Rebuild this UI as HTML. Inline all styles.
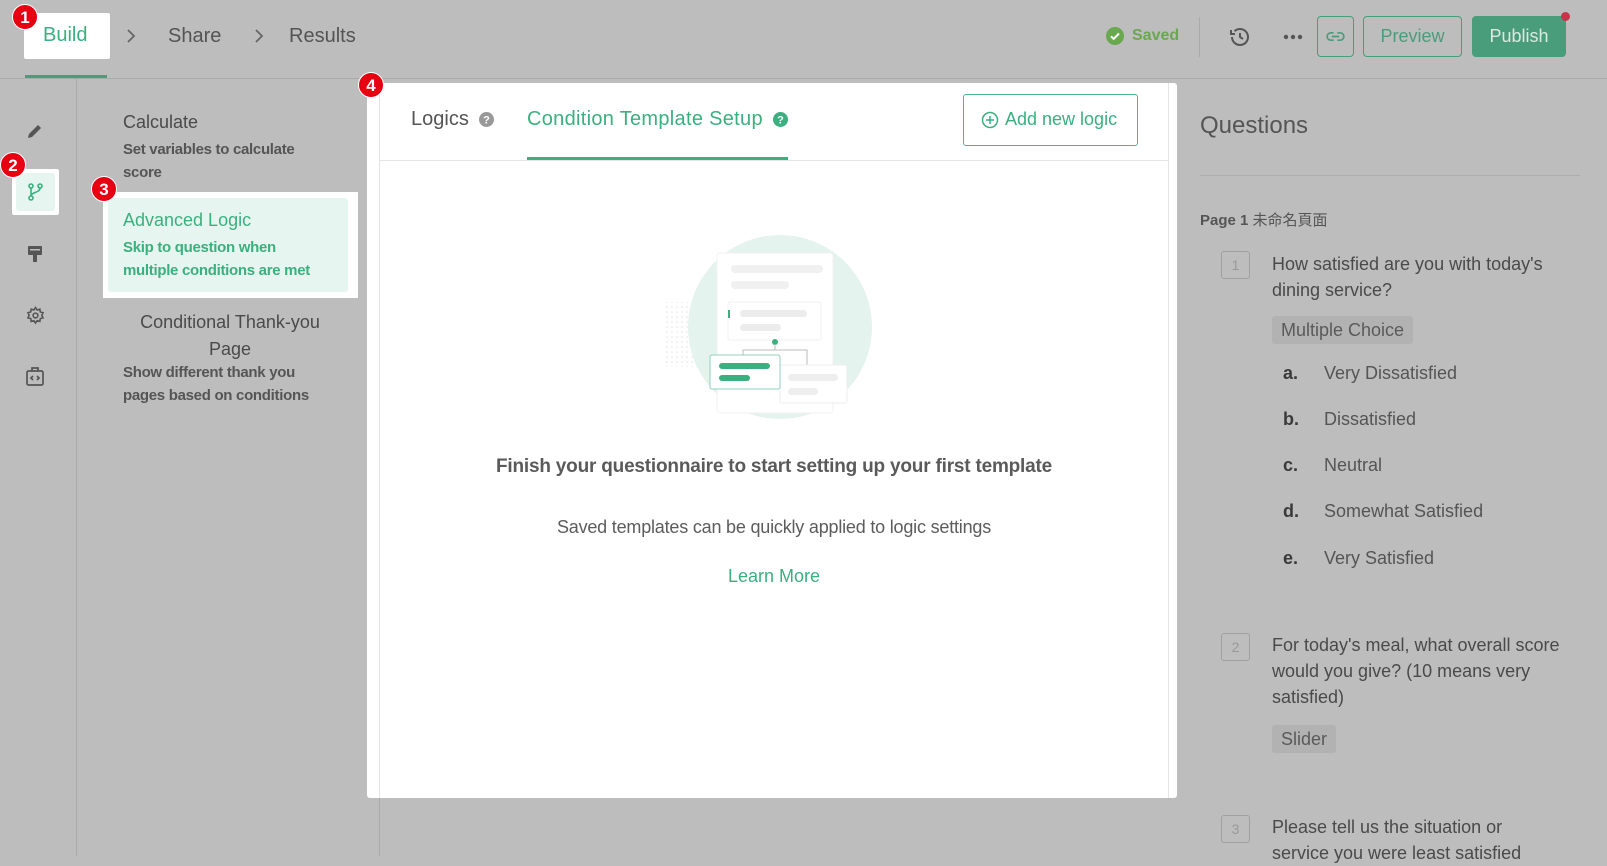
<!DOCTYPE html>
<html><head><meta charset="utf-8"><style>
*{box-sizing:border-box;margin:0;padding:0}
body{width:1607px;height:856px;overflow:hidden;background:#bdbdbd;font-family:"Liberation Sans","Noto Sans CJK TC",sans-serif;position:relative;color:#545454}
.a{position:absolute}
.badge{position:absolute;width:26px;height:26px;border-radius:50%;background:#e60012;color:#fff;font-weight:bold;font-size:17px;text-align:center;line-height:26px;border:1px solid #fff}
.nv{font-size:20px;color:#545454}
.ic{position:absolute}
.q{position:absolute;font-size:18px;line-height:26px;color:#4a4a4a}
.num{position:absolute;width:29px;height:28px;border:1px solid #a0a0a0;border-radius:3px;color:#999;font-size:14px;text-align:center;line-height:26px}
.tag{position:absolute;background:#b2b2b2;border-radius:3px;font-size:18px;color:#5a5a5a;padding:0 9px;height:28px;line-height:28px}
.opt{position:absolute;font-size:18px;color:#555}
.opt b{display:inline-block;width:41px;color:#3a3a3a}
</style></head><body>
<div class="a" style="left:0;top:78px;width:1607px;height:1px;background:#aaa"></div>
<div class="a" style="left:24px;top:13px;width:86px;height:46px;background:#fff;border-radius:2px"></div>
<div class="a" style="left:43px;top:24px;font-size:20px;color:#3bb07f">Build</div>
<div class="a" style="left:25px;top:75px;width:82px;height:3px;background:#4a9d7a"></div>
<svg class="ic" style="left:126px;top:29px" width="10" height="14" viewBox="0 0 10 14" fill="none" stroke="#666" stroke-width="1.8"><path d="M2 1l6 6-6 6"/></svg>
<div class="a nv" style="left:168px;top:25px">Share</div>
<svg class="ic" style="left:254px;top:29px" width="10" height="14" viewBox="0 0 10 14" fill="none" stroke="#666" stroke-width="1.8"><path d="M2 1l6 6-6 6"/></svg>
<div class="a nv" style="left:289px;top:25px">Results</div>
<div class="badge" style="left:12px;top:4px">1</div>

<svg class="ic" style="left:1106px;top:27px" width="18" height="18" viewBox="0 0 18 18"><circle cx="9" cy="9" r="9" fill="#6aa84f"/><path d="M5 9.3l2.7 2.6L13 6.5" stroke="#fff" stroke-width="2" fill="none"/></svg>
<div class="a" style="left:1132px;top:27px;font-size:16px;color:#6aa84f;font-weight:bold">Saved</div>
<div class="a" style="left:1199px;top:17px;width:1px;height:40px;background:#aaa"></div>
<svg class="ic" style="left:1228px;top:25px" width="24" height="24" viewBox="0 0 24 24" fill="none" stroke="#555" stroke-width="2"><path d="M4 12a8 8 0 1 0 2.5-5.8"/><path d="M3 5v4h4"/><path d="M12 8v4l3 2"/></svg>
<svg class="ic" style="left:1283px;top:34px" width="20" height="6" viewBox="0 0 20 6" fill="#555"><circle cx="3" cy="3" r="2.2"/><circle cx="10" cy="3" r="2.2"/><circle cx="17" cy="3" r="2.2"/></svg>
<div class="a" style="left:1317px;top:16px;width:37px;height:41px;border:1px solid #4a9d7a;border-radius:4px"></div>
<svg class="ic" style="left:1326px;top:30px" width="19" height="13" viewBox="0 0 20 14" fill="none" stroke="#4a9d7a" stroke-width="1.8"><path d="M8 3H5a4 4 0 0 0 0 8h3M12 3h3a4 4 0 0 1 0 8h-3M6 7h8"/></svg>
<div class="a" style="left:1363px;top:16px;width:99px;height:41px;border:1px solid #4a9d7a;border-radius:4px;font-size:18px;color:#4a9d7a;text-align:center;line-height:39px">Preview</div>
<div class="a" style="left:1472px;top:16px;width:94px;height:41px;background:#4a9d7a;border-radius:4px;font-size:18px;color:#dce8e2;text-align:center;line-height:41px">Publish</div>
<div class="a" style="left:1561px;top:12px;width:9px;height:9px;border-radius:50%;background:#c9344a"></div>

<div class="a" style="left:76px;top:79px;width:1px;height:777px;background:#aaa"></div>
<svg class="ic" style="left:26px;top:122px" width="18" height="18" viewBox="0 0 18 18"><path d="M2 16l1-4 9-9 3 3-9 9z" fill="#555"/></svg>
<div class="a" style="left:12px;top:169px;width:47px;height:46px;background:#fff;border-radius:2px"></div>
<div class="a" style="left:16px;top:173px;width:39px;height:38px;background:#e6f5ef;border-radius:3px"></div>
<svg class="ic" style="left:26px;top:182px" width="18" height="20" viewBox="0 0 18 20" fill="none" stroke="#3bb07f" stroke-width="1.6"><circle cx="5" cy="4" r="2"/><circle cx="5" cy="16" r="2"/><circle cx="14" cy="4" r="2"/><path d="M5 6v8M14 6c0 5-9 4-9 8"/></svg>
<div class="badge" style="left:0px;top:152px">2</div>
<svg class="ic" style="left:27px;top:245px" width="16" height="18" viewBox="0 0 16 18" fill="#555"><rect x="1" y="1" width="14" height="9" rx="1"/><rect x="6" y="10" width="4" height="7"/><rect x="3" y="4" width="10" height="1.5" fill="#bdbdbd"/></svg>
<svg class="ic" style="left:26px;top:306px" width="19" height="19" viewBox="0 0 24 24" fill="none" stroke="#555" stroke-width="2"><circle cx="12" cy="12" r="3"/><path d="M12 2l2 3 3.5-1 .5 3.5 3.5 1-1.5 3.5 1.5 3-3.5 1-.5 3.5-3.5-1-2 3-2-3-3.5 1-.5-3.5-3.5-1 1.5-3.5L2.5 8.5 6 7.5 6.5 4 10 5z"/></svg>
<svg class="ic" style="left:26px;top:367px" width="18" height="20" viewBox="0 0 18 20" fill="none" stroke="#555" stroke-width="1.7"><rect x="1" y="4" width="16" height="14" rx="1.5"/><path d="M6 4V1h6v3M7 9l-2 2 2 2M11 9l2 2-2 2"/></svg>

<div class="a" style="left:379px;top:79px;width:1px;height:777px;background:#aaa"></div>
<div class="a" style="left:123px;top:112px;font-size:18px;color:#4a4a4a">Calculate</div>
<div class="a" style="left:123px;top:138px;font-size:15px;line-height:23px;color:#555;width:190px;font-weight:bold;letter-spacing:-0.3px">Set variables to calculate score</div>
<div class="a" style="left:103px;top:192px;width:255px;height:106px;background:#fff"></div>
<div class="a" style="left:108px;top:198px;width:240px;height:94px;background:#e6f5ef;border-radius:3px"></div>
<div class="a" style="left:123px;top:210px;font-size:18px;color:#3bb07f">Advanced Logic</div>
<div class="a" style="left:123px;top:236px;font-size:15px;line-height:23px;color:#3bb07f;font-weight:bold;letter-spacing:-0.3px">Skip to question when<br>multiple conditions are met</div>
<div class="badge" style="left:91px;top:176px">3</div>
<div class="a" style="left:110px;top:309px;width:240px;text-align:center;font-size:18px;line-height:27px;color:#4a4a4a">Conditional Thank-you<br>Page</div>
<div class="a" style="left:123px;top:361px;font-size:15px;line-height:23px;color:#555;font-weight:bold;letter-spacing:-0.3px">Show different thank you<br>pages based on conditions</div>

<div class="a" style="left:367px;top:83px;width:810px;height:715px;background:#fff;border-radius:3px"></div>
<div class="a" style="left:379px;top:83px;width:1px;height:715px;background:#e5e5e5"></div>
<div class="a" style="left:1168px;top:83px;width:1px;height:715px;background:#e5e5e5"></div>
<div class="a" style="left:380px;top:160px;width:788px;height:1px;background:#e5e5e5"></div>
<div class="badge" style="left:358px;top:72px">4</div>
<div class="a" style="left:411px;top:108px;font-size:20px;color:#555">Logics</div>
<svg class="ic" style="left:479px;top:112px" width="15" height="15" viewBox="0 0 15 15"><circle cx="7.5" cy="7.5" r="7.5" fill="#999"/><text x="7.5" y="11.5" font-size="11" font-weight="bold" fill="#fff" text-anchor="middle" font-family="Liberation Sans">?</text></svg>
<div class="a" style="left:527px;top:108px;font-size:20px;color:#3bb07f;letter-spacing:0.3px">Condition Template Setup</div>
<svg class="ic" style="left:773px;top:112px" width="15" height="15" viewBox="0 0 15 15"><circle cx="7.5" cy="7.5" r="7.5" fill="#3bb07f"/><text x="7.5" y="11.5" font-size="11" font-weight="bold" fill="#fff" text-anchor="middle" font-family="Liberation Sans">?</text></svg>
<div class="a" style="left:527px;top:157px;width:261px;height:3px;background:#3bb07f"></div>
<div class="a" style="left:963px;top:94px;width:175px;height:52px;border:1px solid #4fb48c;border-radius:3px"></div>
<svg class="ic" style="left:981px;top:111px" width="18" height="18" viewBox="0 0 18 18" fill="none" stroke="#3bb07f" stroke-width="1.5"><circle cx="9" cy="9" r="7.5"/><path d="M9 5v8M5 9h8"/></svg>
<div class="a" style="left:1005px;top:109px;font-size:18px;color:#3bb07f">Add new logic</div>

<svg class="ic" style="left:650px;top:220px" width="260" height="210" viewBox="0 0 260 210">
<defs><pattern id="d" width="5" height="5" patternUnits="userSpaceOnUse"><circle cx="2" cy="2" r="0.8" fill="#e3e3e3"/></pattern></defs>
<rect x="14" y="82" width="60" height="65" fill="url(#d)"/>
<circle cx="130" cy="107" r="92" fill="#e4f3ed"/>
<rect x="67" y="33" width="116" height="160" rx="3" fill="#fff" stroke="#f2f2f2"/>
<rect x="81" y="45" width="92" height="8" rx="4" fill="#f0f0f0"/>
<rect x="81" y="61" width="58" height="8" rx="4" fill="#f0f0f0"/>
<rect x="78" y="82" width="93" height="38" rx="2" fill="#fff" stroke="#f0f0f0"/>
<rect x="78" y="90" width="2" height="8" fill="#3bb07f"/>
<rect x="90" y="90" width="67" height="7" rx="3.5" fill="#ececec"/>
<rect x="90" y="104" width="41" height="7" rx="3.5" fill="#ececec"/>
<circle cx="125" cy="122" r="3" fill="#3bb07f"/>
<path d="M125 124v6H93v8M125 130h32v16" stroke="#bbb" fill="none"/>
<rect x="130" y="145" width="67" height="38" rx="2" fill="#fff" stroke="#eee"/>
<rect x="138" y="154" width="50" height="7" rx="3.5" fill="#eee"/>
<rect x="138" y="168" width="30" height="7" rx="3.5" fill="#eee"/>
<rect x="60" y="135" width="70" height="34" rx="2" fill="#fff" stroke="#8fd1b5"/>
<rect x="69" y="143" width="51" height="6" rx="3" fill="#3bb07f"/>
<rect x="69" y="155" width="31" height="6" rx="3" fill="#3bb07f"/>
</svg>

<div class="a" style="left:380px;top:456px;width:788px;text-align:center;font-size:19px;font-weight:bold;color:#5a5a5a;letter-spacing:-0.2px">Finish your questionnaire to start setting up your first template</div>
<div class="a" style="left:380px;top:517px;width:788px;text-align:center;font-size:18px;color:#5c5c5c;letter-spacing:-0.2px">Saved templates can be quickly applied to logic settings</div>
<div class="a" style="left:380px;top:566px;width:788px;text-align:center;font-size:18px;color:#3bb07f">Learn More</div>

<div class="a" style="left:1200px;top:112px;font-size:24px;color:#555">Questions</div>
<div class="a" style="left:1200px;top:175px;width:380px;height:1px;background:#adadad"></div>
<div class="a" style="left:1200px;top:209px;font-size:15px;color:#555;font-weight:bold">Page 1 <span style="font-weight:normal">未命名頁面</span></div>
<div class="num" style="left:1221px;top:251px">1</div>
<div class="q" style="left:1272px;top:251px;width:310px">How satisfied are you with today's dining service?</div>
<div class="tag" style="left:1272px;top:316px">Multiple Choice</div>
<div class="opt" style="left:1283px;top:363px"><b>a.</b>Very Dissatisfied</div>
<div class="opt" style="left:1283px;top:409px"><b>b.</b>Dissatisfied</div>
<div class="opt" style="left:1283px;top:455px"><b>c.</b>Neutral</div>
<div class="opt" style="left:1283px;top:501px"><b>d.</b>Somewhat Satisfied</div>
<div class="opt" style="left:1283px;top:548px"><b>e.</b>Very Satisfied</div>
<div class="num" style="left:1221px;top:633px">2</div>
<div class="q" style="left:1272px;top:632px;width:300px">For today's meal, what overall score would you give? (10 means very satisfied)</div>
<div class="tag" style="left:1272px;top:725px">Slider</div>
<div class="num" style="left:1221px;top:815px">3</div>
<div class="q" style="left:1272px;top:814px;width:280px">Please tell us the situation or service you were least satisfied</div>
</body></html>
